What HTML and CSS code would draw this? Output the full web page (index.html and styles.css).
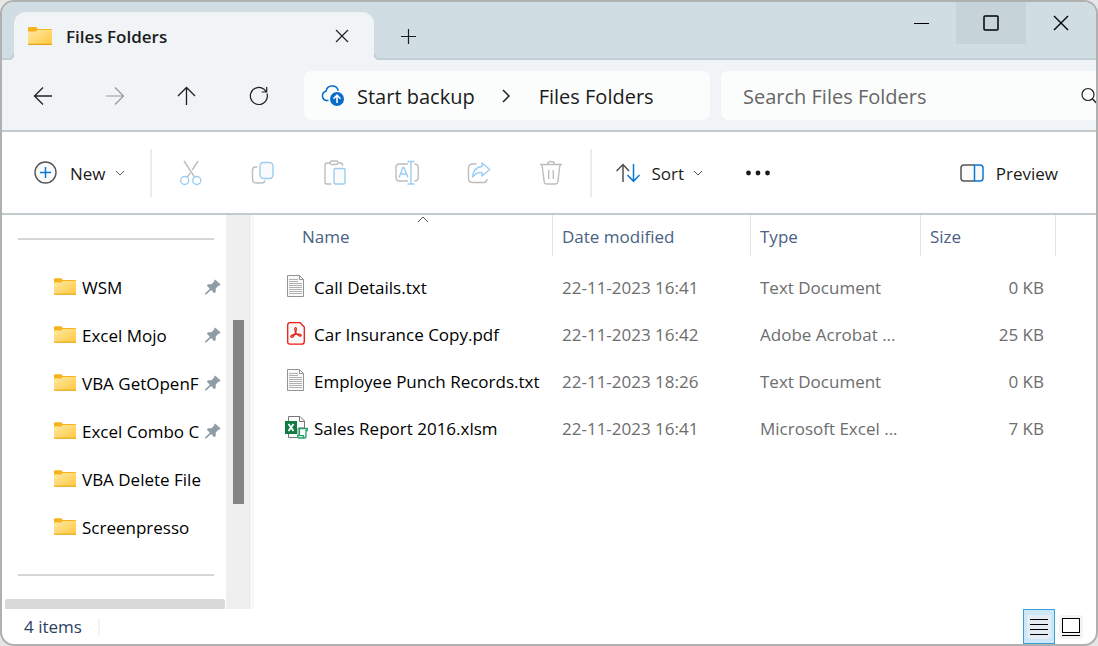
FILE: index.html
```html
<!DOCTYPE html>
<html lang="en">

<head>
  <meta charset="UTF-8">
  <meta name="viewport" content="width=device-width, initial-scale=1.0">
  <title>Files Folders</title>
  <link rel="stylesheet" href="styles.css">
</head>

<body>
<svg class="sprite" aria-hidden="true">
  <defs>
    <linearGradient id="folder_fill" x1="0" y1="0" x2="1" y2="1">
      <stop offset="0" stop-color="#ffe9a6"/>
      <stop offset="1" stop-color="#ffc83d"/>
    </linearGradient>
  </defs>
  <symbol id="folder" viewBox="0 0 24 18">
    <path d="M0 1Q0 0 1 0H7.500Q8.500 0 9 1L9.500 2H23Q24 2 24 3V8H0z" fill="#f8b31c"/>
    <path d="M0 4.500H8L9.500 3H24V17Q24 18 23 18H1Q0 18 0 17z" fill="url(#folder_fill)"/>
    <path d="M0 17Q0 18 1 18H23Q24 18 24 17V16.800H0z" fill="#e3a21a"/>
  </symbol>
  <symbol id="pin" viewBox="0 0 16 16">
    <path d="M10 0.500L15.700 5.500L14.600 6.600L13.700 6.400L10.700 9.600V13L9.300 14.200L6.100 11L1.200 15.600H0V14.600L4.800 9.700L1.800 6.500L3 5.200H6.400L9.400 2.300L9.100 1.400z" fill="#929ca3"/>
  </symbol>
  <symbol id="txt" viewBox="-1 0 23 23">
    <path d="M1.500 0.500H13.500L17.500 4.500V21.500H1.500z" fill="#f9f9f9" stroke="#949494"/>
    <path d="M13.500 0.500V4.500H17.500" fill="none" stroke="#949494"/>
    <path d="M3 4.500H12M3 6.500H12M3 8.500H16M3 10.500H16M3 12.500H16M3 14.500H16M3 16.500H16M3 18.500H16" stroke="#b0b0b0"/>
  </symbol>
  <symbol id="chevron_down" viewBox="0 0 10 6">
    <path d="M1 1L5 5L9 1" fill="none" stroke="#5a5a5a"/>
  </symbol>
</svg>

<div class="window">
  <header class="titlebar">
    <div class="tab">
      <svg class="tab_icon"><use href="#folder"/></svg>
      <h1 class="tab_title">Files Folders</h1>
      <button class="tab_close" aria-label="Close tab">
        <svg width="14" height="14" viewBox="0 0 14 14"><path d="M1 1L13 13M13 1L1 13" fill="none" stroke="#222" stroke-width="1.200"/></svg>
      </button>
    </div>
    <button class="tab_new" aria-label="New tab">
      <svg width="16" height="16" viewBox="0 0 16 16"><path d="M8.500 1V16M1 8.500H16" fill="none" stroke="#1c1c1c" stroke-width="1.200"/></svg>
    </button>
    <div class="controls">
      <button aria-label="Minimize">
        <svg width="16" height="16" viewBox="0 0 16 16"><path d="M1 8.500H16" stroke="#000"/></svg>
      </button>
      <button class="active" aria-label="Maximize">
        <svg width="16" height="16" viewBox="0 0 16 16"><rect x="1" y="1" width="14" height="14" rx="1" fill="none" stroke="#000" stroke-width="1.500"/></svg>
      </button>
      <button aria-label="Close">
        <svg width="16" height="16" viewBox="0 0 16 16"><path d="M1 1L15 15M15 1L1 15" fill="none" stroke="#000" stroke-width="1.400"/></svg>
      </button>
    </div>
  </header>

  <nav class="navbar">
    <div class="nav_buttons">
      <button aria-label="Back">
        <svg width="24" height="24" viewBox="0 0 24 24"><path d="M21 12H3.500M12 3.500L3.500 12L12 20.500" fill="none" stroke="#1f1f1f" stroke-width="1.300"/></svg>
      </button>
      <button aria-label="Forward">
        <svg width="24" height="24" viewBox="0 0 24 24"><path d="M3 12H20.500M12 3.500L20.500 12L12 20.500" fill="none" stroke="#979a9b" stroke-width="1.200"/></svg>
      </button>
      <button aria-label="Up">
        <svg width="24" height="24" viewBox="0 0 24 24"><path d="M11.500 21V3.500M3 12L11.500 3.500L20 12" fill="none" stroke="#1f1f1f" stroke-width="1.300"/></svg>
      </button>
      <button aria-label="Refresh">
        <svg width="24" height="24" viewBox="0 0 24 24"><path d="M20 9.500A8.500 8.500 0 1 1 17 5.200L19.500 8M19.700 3V8H14.700" fill="none" stroke="#1f1f1f" stroke-width="1.200"/></svg>
      </button>
    </div>
    <div class="address">
      <svg width="24" height="22" viewBox="0 0 24 22">
        <path d="M7.500 15.500H5.500A4.700 4.700 0 0 1 5 6.300A6.300 6.300 0 0 1 17.300 5.800" fill="none" stroke="#0a6cc9" stroke-width="1.500"/>
        <circle cx="16" cy="14" r="7" fill="#0a6cc9"/>
        <path d="M16 18V10.500M12.500 13.700L16 10.200L19.500 13.700" fill="none" stroke="#fff" stroke-width="1.600"/>
      </svg>
      <a href="#">Start backup</a>
      <svg class="address_sep" width="10" height="14" viewBox="0 0 10 14"><path d="M2 1L8 7L2 13" fill="none" stroke="#1f1f1f" stroke-width="1.500"/></svg>
      <a href="#">Files Folders</a>
    </div>
    <div class="search">
      <input type="text" placeholder="Search Files Folders" aria-label="Search Files Folders">
      <svg width="16" height="18" viewBox="0 0 16 18"><circle cx="8" cy="7.500" r="6" fill="none" stroke="#222" stroke-width="1.200"/><path d="M12.200 11.700L18 17.500" stroke="#222" stroke-width="1.500"/></svg>
    </div>
  </nav>

  <div class="toolbar">
    <button class="tool_new">
      <svg width="24" height="24" viewBox="0 0 24 24"><circle cx="11.500" cy="11.500" r="10.500" fill="#fafafa" stroke="#555" stroke-width="1.400"/><path d="M11.500 6V17M6 11.500H17" stroke="#0a78d4" stroke-width="1.500"/></svg>
      <span>New</span>
      <svg class="chevron"><use href="#chevron_down"/></svg>
    </button>
    <i class="divider"></i>
    <div class="tool_icons">
      <button aria-label="Cut" disabled>
        <svg width="24" height="26" viewBox="0 0 24 26" fill="none" stroke-width="1.400"><path d="M5 1L15.500 17M19 1L13.200 10M11.200 12.800L8.500 17" stroke="#bdbdbd"/><circle cx="5.700" cy="20.500" r="4" stroke="#9ccdf3"/><circle cx="17.800" cy="20.500" r="4" stroke="#9ccdf3"/></svg>
      </button>
      <button aria-label="Copy" disabled>
        <svg width="24" height="26" viewBox="0 0 24 26" fill="none" stroke-width="1.400"><path d="M6.300 7H4.500Q1.500 7 1.500 10V19Q1.500 23 5.500 23H10.500Q13.500 23 14 20.500" stroke="#bdbdbd"/><rect x="9" y="2.500" width="13" height="16" rx="3.500" fill="#fafafa" stroke="#9ccdf3"/></svg>
      </button>
      <button aria-label="Paste" disabled>
        <svg width="24" height="26" viewBox="0 0 24 26" fill="none" stroke-width="1.400"><path d="M7 3H4Q2 3 2 5V22Q2 24 4 24H8.500M15 3H18Q19.500 3 19.500 5V6" stroke="#bdbdbd"/><rect x="7" y="1" width="8" height="3.500" rx="1.700" stroke="#bdbdbd"/><rect x="11" y="8.500" width="11" height="15.500" rx="1.500" fill="#fafafa" stroke="#9ccdf3"/></svg>
      </button>
      <button aria-label="Rename" disabled>
        <svg width="24" height="26" viewBox="0 0 24 26" fill="none" stroke-width="1.400"><path d="M13 4H4.500Q1 4 1 7.500V17.500Q1 21 4.500 21H13M19.500 4Q23.300 4 23.300 8V17Q23.300 21 19.500 21" stroke="#bdbdbd"/><path d="M4 17.500L8 7.500H9L13 17.500M5.500 14H11.500" stroke="#9ccdf3"/><path d="M16 1.500V24M12.500 1.500H19.500M12.500 24H19.500" stroke="#9ccdf3"/></svg>
      </button>
      <button aria-label="Share" disabled>
        <svg width="24" height="26" viewBox="0 0 24 26" fill="none" stroke-width="1.400"><path d="M9.500 4H5.500Q1.500 4 1.500 8V18.500Q1.500 22.500 5.500 22.500H16Q20 22.500 20 19" stroke="#bdbdbd"/><path d="M15 3L22.800 9.500L15 16V12.500Q9 12 5.500 17Q6 7.500 15 6.500z" stroke="#9ccdf3" stroke-linejoin="round"/></svg>
      </button>
      <button aria-label="Delete" disabled>
        <svg width="24" height="26" viewBox="0 0 24 26" fill="none" stroke="#bdbdbd" stroke-width="1.400"><path d="M1 4.500H23M8.500 4.500Q8.500 1.500 12 1.500Q15.500 1.500 15.500 4.500M3 4.500L5.200 22Q5.500 24 7.500 24H16.500Q18.500 24 18.800 22L21 4.500M9.700 10V19M14.300 10V19"/></svg>
      </button>
    </div>
    <i class="divider"></i>
    <button class="tool_sort">
      <svg width="24" height="20" viewBox="0 0 24 20" fill="none" stroke-width="1.500"><path d="M7 19V2M0.500 8L7 1.500L13 8" stroke="#505050"/><path d="M17.500 1V18M11.500 12L17.500 18.300L23.500 12" stroke="#0a78d4"/></svg>
      <span>Sort</span>
      <svg class="chevron"><use href="#chevron_down"/></svg>
    </button>
    <button class="tool_more" aria-label="See more">
      <svg width="24" height="6" viewBox="0 0 24 6" fill="#1a1a1a"><circle cx="2.500" cy="3" r="2.400"/><circle cx="12" cy="3" r="2.400"/><circle cx="21.500" cy="3" r="2.400"/></svg>
    </button>
    <button class="tool_preview">
      <svg width="24" height="18" viewBox="0 0 24 18" fill="#fafafa" stroke-width="1.500"><path d="M14 1H4Q1 1 1 4V14Q1 17 4 17H14" stroke="#555"/><path d="M14.500 1H20Q23 1 23 4V14Q23 17 20 17H14.500z" stroke="#0a78d4"/></svg>
      <span>Preview</span>
    </button>
  </div>

  <main class="content">
    <aside class="sidebar">
      <div class="sidebar_list">
        <hr>
        <ul>
          <li><a href="#"><svg class="folder"><use href="#folder"/></svg><span>WSM</span><svg class="pin"><use href="#pin"/></svg></a></li>
          <li><a href="#"><svg class="folder"><use href="#folder"/></svg><span>Excel Mojo</span><svg class="pin"><use href="#pin"/></svg></a></li>
          <li><a href="#"><svg class="folder"><use href="#folder"/></svg><span>VBA GetOpenF</span><svg class="pin"><use href="#pin"/></svg></a></li>
          <li><a href="#"><svg class="folder"><use href="#folder"/></svg><span>Excel Combo C</span><svg class="pin"><use href="#pin"/></svg></a></li>
          <li><a href="#"><svg class="folder"><use href="#folder"/></svg><span>VBA Delete File</span></a></li>
          <li><a href="#"><svg class="folder"><use href="#folder"/></svg><span>Screenpresso</span></a></li>
        </ul>
        <hr>
        <div class="scroll_x"></div>
      </div>
      <div class="scroll_y"><div class="scroll_thumb"></div></div>
    </aside>

    <section class="files">
      <table>
        <colgroup>
          <col class="col_name"><col class="col_date"><col class="col_type"><col class="col_size"><col>
        </colgroup>
        <thead>
          <tr>
            <th class="name">Name
              <svg class="sort_mark" width="12" height="7" viewBox="0 0 12 7"><path d="M1 6L6 1L11 6" fill="none" stroke="#555"/></svg>
            </th>
            <th>Date modified</th>
            <th>Type</th>
            <th>Size</th>
            <td></td>
          </tr>
        </thead>
        <tbody>
          <tr>
            <td class="name"><div><svg class="file"><use href="#txt"/></svg><span>Call Details.txt</span></div></td>
            <td>22-11-2023 16:41</td>
            <td>Text Document</td>
            <td class="size">0 KB</td>
            <td></td>
          </tr>
          <tr>
            <td class="name"><div>
              <svg class="file" viewBox="-1 0 23 23"><path d="M4 0.700H14L18.300 5V19.500Q18.300 22.200 15.500 22.200H4Q1.700 22.200 1.700 20V3Q1.700 0.700 4 0.700z" fill="#f7f7f7" stroke="#f0190f" stroke-width="1.300"/><path d="M9.500 10Q7.900 6 9.500 5.500Q11.200 5.700 9.700 10Q8 14.500 6.200 15.300Q4.300 15.500 4.900 14.200Q6 12.700 10.500 12.200Q15.300 12 15.300 13.600Q14.600 15 12.300 13.200Q10.500 12 9.500 10z" fill="none" stroke="#e8231a" stroke-width="1.200"/></svg>
              <span>Car Insurance Copy.pdf</span></div></td>
            <td>22-11-2023 16:42</td>
            <td>Adobe Acrobat ...</td>
            <td class="size">25 KB</td>
            <td></td>
          </tr>
          <tr>
            <td class="name"><div><svg class="file"><use href="#txt"/></svg><span>Employee Punch Records.txt</span></div></td>
            <td>22-11-2023 18:26</td>
            <td>Text Document</td>
            <td class="size">0 KB</td>
            <td></td>
          </tr>
          <tr>
            <td class="name"><div>
              <svg class="file" viewBox="0 0 23 23"><path d="M3.500 5V0.500H15L19.500 5V12H13V21.500H3.500V18" fill="#fff" stroke="#777"/><path d="M14.500 0.500V5.500H19.500" fill="none" stroke="#777"/><rect y="5" width="12" height="13" fill="#107c41"/><path d="M3.500 8L8.500 15M8.500 8L3.500 15" stroke="#fff" stroke-width="1.800"/><path d="M14.500 19.500V12.500H22.300V14.500H21V20Q21 22 19.200 22H14Q12.500 22 12.700 19.700H18.500Q18.300 22 19.500 22" fill="#fff" stroke="#21a366" stroke-width="1.300"/></svg>
              <span>Sales Report 2016.xlsm</span></div></td>
            <td>22-11-2023 16:41</td>
            <td>Microsoft Excel ...</td>
            <td class="size">7 KB</td>
            <td></td>
          </tr>
        </tbody>
      </table>
    </section>
  </main>

  <footer class="statusbar">
    <p>4 items</p>
    <i></i>
    <div class="views">
      <button class="active" aria-label="Details view">
        <svg width="24" height="24" viewBox="0 0 24 24"><rect width="24" height="24" rx="3" fill="#e4edf3"/><path d="M3 4.500H21M3 9.500H21M3 14.500H21M3 19.500H21" stroke="#000"/></svg>
      </button>
      <button aria-label="Large icons view">
        <svg width="24" height="24" viewBox="0 0 24 24"><rect width="24" height="24" rx="3" fill="#f4f4f4"/><rect x="3.500" y="3.500" width="17" height="14" fill="#fff" stroke="#000"/><path d="M3 20.500H21" stroke="#000"/></svg>
      </button>
    </div>
  </footer>
</div>
</body>

</html>
```
FILE: styles.css
```css
* {
  box-sizing: border-box;
}

body,
h1,
p,
ul {
  padding: 0;
  margin: 0;
}

body {
  background: #e6e6e6;
  font-family: 'Open Sans', 'Noto Sans', sans-serif;
  font-size: 17px;
  color: #1b1b1b;
}

button,
input {
  padding: 0;
  border: 0;
  background: none;
  font: inherit;
  color: inherit;
}

button {
  display: flex;
  align-items: center;
  justify-content: center;
}

a {
  color: inherit;
  text-decoration: none;
}

svg {
  display: block;
  flex: none;
}

.sprite {
  position: absolute;
  width: 0;
  height: 0;
}

.window {
  display: flex;
  flex-direction: column;
  min-height: 100vh;
  overflow: hidden;
  border: 2px solid #b0b0b0;
  border-radius: 14px;
  background: #fff;
}

/* title bar */
.titlebar {
  display: flex;
  height: 58px;
  padding-left: 12px;
  background: linear-gradient(#d0dde2 56px, #c2ced5 56px);
}

.tab {
  position: relative;
  display: flex;
  align-items: center;
  width: 360px;
  margin-top: 10px;
  padding: 0 25px 0 14px;
  border-radius: 12px 12px 0 0;
  background: #f0f4f6;
}

.tab::before,
.tab::after {
  content: '';
  position: absolute;
  bottom: 0;
  width: 6px;
  height: 6px;
}

.tab::before {
  left: -6px;
  background: radial-gradient(circle at 0 0, #d0dde2 4px, #c2ced5 5px, #c2ced5 6px, #f0f4f6 7px);
}

.tab::after {
  right: -6px;
  background: radial-gradient(circle at 100% 0, #d0dde2 4px, #c2ced5 5px, #c2ced5 6px, #f0f4f6 7px);
}

.tab_icon {
  width: 24px;
  height: 18px;
}

.tab_title {
  flex: 1;
  margin-left: 14px;
  font-size: 17px;
  font-weight: 600;
}

.tab_new {
  width: 68px;
  margin-top: 10px;
}

.controls {
  display: flex;
  height: 42px;
  margin-left: auto;
}

.controls button {
  width: 70px;
}

.controls .active {
  background: #c6d3d9;
}

/* navigation row */
.navbar {
  display: flex;
  align-items: center;
  height: 72px;
  padding-top: 1px;
  border-bottom: 2px solid #c1cbcd;
  background: #f0f4f6;
}

.nav_buttons {
  display: flex;
  gap: 48px;
  padding: 0 33px 0 29px;
}

.address,
.search {
  display: flex;
  align-items: center;
  height: 49px;
  padding-top: 1px;
  background: #fbfdfc;
  font-size: 20px;
}

.address {
  flex: 1;
  margin-right: 11px;
  padding-left: 17px;
  border-radius: 7px;
}

.address a {
  margin-left: 12px;
}

.address_sep {
  margin: 0 16px 0 26px;
}

.search {
  width: 375px;
  border-radius: 7px 0 0 7px;
}

.search input {
  flex: 1;
  min-width: 0;
  padding-left: 22px;
}

.search input::placeholder {
  color: #666;
}

/* command bar */
.toolbar {
  display: flex;
  align-items: center;
  height: 83px;
  border-bottom: 2px solid #c1cbcd;
}

.toolbar button {
  padding-top: 1px;
}

.divider {
  width: 2px;
  height: 48px;
  background: #ececec;
}

.chevron {
  width: 10px;
  height: 6px;
  margin-left: 9px;
}

.toolbar .tool_new {
  padding: 1px 25px 0 32px;
}

.tool_new span {
  margin-left: 12px;
}

.tool_icons {
  display: flex;
  gap: 48px;
  padding: 0 27px 0 27px;
}

.toolbar .tool_sort {
  padding-left: 24px;
}

.tool_sort span {
  margin-left: 12px;
}

.tool_more {
  margin-left: 43px;
}

.toolbar .tool_preview {
  gap: 12px;
  margin-left: auto;
  padding-right: 38px;
}

/* content */
.content {
  flex: 1;
  display: flex;
}

.sidebar {
  display: flex;
  width: 252px;
  border-right: 2px solid #f6f6f6;
}

.sidebar_list {
  flex: 1;
  display: flex;
  flex-direction: column;
  min-width: 0;
}

.sidebar hr {
  height: 2px;
  margin: 23px 12px 23px 16px;
  border: 0;
  background: #d5d5d5;
}

.sidebar ul {
  list-style: none;
}

.sidebar a {
  display: flex;
  align-items: center;
  height: 48px;
  padding: 0 5px 0 52px;
  color: #000;
}

.sidebar span {
  flex: 1;
  margin-left: 6px;
  white-space: nowrap;
}

.folder {
  width: 22px;
  height: 17px;
  margin-bottom: 2px;
}

.pin {
  width: 16px;
  height: 16px;
}

.scroll_x {
  height: 10px;
  margin: auto 1px 0 3px;
  border-radius: 2px 2px 0 0;
  background: #d9d9d9;
}

.scroll_y {
  width: 25px;
  margin-right: 1px;
  padding: 105px 7px 0;
  background: #efefef;
}

.scroll_thumb {
  height: 184px;
  background: #858585;
}

/* file list */
.files {
  flex: 1;
}

table {
  width: 100%;
  table-layout: fixed;
  border-collapse: separate;
  border-spacing: 0;
}

.col_name {
  width: 299px;
}

.col_date {
  width: 198px;
}

.col_type {
  width: 170px;
}

.col_size {
  width: 135px;
}

th {
  position: relative;
  height: 41px;
  padding: 2px 9px 0;
  border-right: 1px solid #e2e2e2;
  font-weight: 400;
  text-align: left;
  color: #4a6184;
}

th.name {
  padding-left: 48px;
}

.sort_mark {
  position: absolute;
  top: 1px;
  left: 163px;
}

tbody::before {
  content: '';
  display: table-row;
  height: 8px;
}

td {
  padding: 0 9px;
  white-space: nowrap;
  color: #6d6d6d;
}

tbody td {
  height: 47px;
}

td.name {
  padding: 0 0 0 31px;
  color: #000;
}

td.name div {
  display: flex;
  align-items: center;
}

td.name span {
  margin-left: 6px;
}

.file {
  width: 23px;
  height: 23px;
  margin-bottom: 2px;
}

td.size {
  padding-right: 12px;
  text-align: right;
}

/* status bar */
.statusbar {
  display: flex;
  align-items: center;
  height: 35px;
  padding-left: 22px;
  color: #2b4162;
}

.statusbar i {
  width: 2px;
  height: 17px;
  margin-left: 16px;
  background: #f3f3f3;
}

.views {
  display: flex;
  height: 100%;
  margin-left: auto;
  padding-right: 9px;
}

.views button {
  width: 32px;
}

.views .active {
  border: 1px solid #3c9fd6;
  background: #cce8f6;
}
```
